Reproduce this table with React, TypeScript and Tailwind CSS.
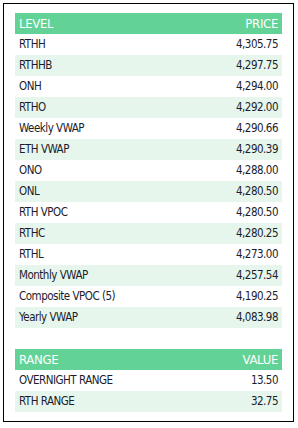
import React from 'react';

const levels: [ string, string ][] = [
  [ "RTHH", "4,305.75" ],
  [ "RTHHB", "4,297.75" ],
  [ "ONH", "4,294.00" ],
  [ "RTHO", "4,292.00" ],
  [ "Weekly VWAP", "4,290.66" ],
  [ "ETH VWAP", "4,290.39" ],
  [ "ONO", "4,288.00" ],
  [ "ONL", "4,280.50" ],
  [ "RTH VPOC", "4,280.50" ],
  [ "RTHC", "4,280.25" ],
  [ "RTHL", "4,273.00" ],
  [ "Monthly VWAP", "4,257.54" ],
  [ "Composite VPOC (5)", "4,190.25" ],
  [ "Yearly VWAP", "4,083.98" ],
];

const ranges: [ string, string ][] = [
  [ "OVERNIGHT RANGE", "13.50" ],
  [ "RTH RANGE", "32.75" ],
];

const Table = ( { head, rows }: { head: [ string, string ], rows: [ string, string ][] } ) => (
  <div className="flex flex-col">
    <div className="flex justify-between items-center h-[21px] px-1 bg-[#62d296] text-white text-[13px] tracking-[-0.3px] uppercase">
      <span>{ head[ 0 ] }</span>
      <span>{ head[ 1 ] }</span>
    </div>
    { rows.map( ( r, i ) => (
      <div key={ r[ 0 ] }
           className={ "flex justify-between items-center h-[21px] px-1 text-[#1c1c2c] " + ( i % 2 ? "bg-[#e6f6ed]" : "bg-white" ) }>
        <span>{ r[ 0 ] }</span>
        <span>{ r[ 1 ] }</span>
      </div>
    ) ) }
  </div>
);

export default function App() {
  return (
    <div className="w-[298px] h-[428px] bg-white p-[3px]" style={ { fontFamily: '"DejaVu Sans Condensed", "DejaVu Sans", sans-serif' } }>
      <div className="w-[291px] h-[419px] border border-black px-[11px] pt-[9px] flex flex-col gap-[21px] text-[11.5px] tracking-[-0.5px]">
        <Table head={ [ "Level", "Price" ] } rows={ levels }/>
        <Table head={ [ "Range", "Value" ] } rows={ ranges }/>
      </div>
    </div>
  );
}
